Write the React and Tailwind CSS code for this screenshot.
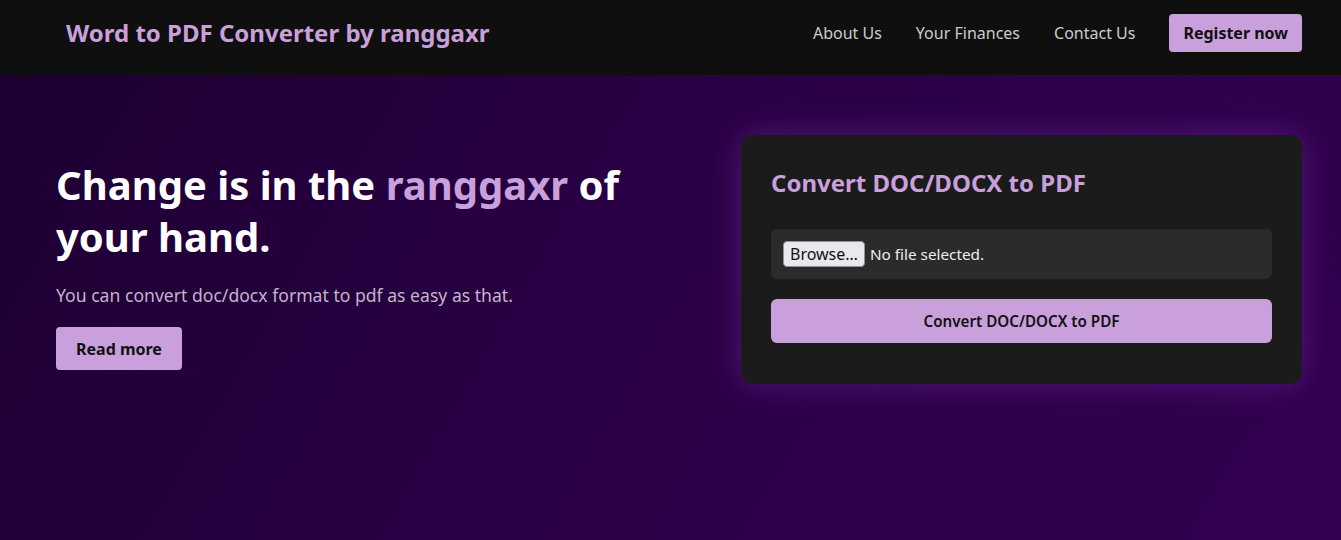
export default function App() {
  return (
    <div className="min-h-[540px] flex flex-col font-['Noto_Sans',sans-serif] bg-[linear-gradient(120deg,#1c0031_0%,#2a0046_50%,#33004f_100%)]">
      <nav className="h-[75px] bg-[#0f0f0f] flex items-center justify-between pl-[66px] pr-[39px] pb-[9px]">
        <div className="text-[24px] font-bold text-[#c9a0dc] leading-none">Word to PDF Converter by ranggaxr</div>
        <div className="flex items-center">
          <a className="text-[16px] text-[#cccccc] mr-[34px]">About Us</a>
          <a className="text-[16px] text-[#cccccc] mr-[34px]">Your Finances</a>
          <a className="text-[16px] text-[#cccccc] mr-[34px]">Contact Us</a>
          <button className="h-[38px] px-[14px] rounded-[4px] bg-[#c9a0dc] text-[#111] text-[16px] font-bold">Register now</button>
        </div>
      </nav>
      <main className="flex items-start justify-between pl-[56px] pr-[39px] pt-[60px]">
        <div className="w-[600px] pt-[24px]">
          <h1 className="text-[40px] leading-[52px] font-bold text-white">
            <span>Change is in the </span><span className="text-[#c9a0dc]">ranggaxr</span><span> of your hand.</span>
          </h1>
          <p className="mt-[18px] text-[17.6px] leading-[28px] text-[#c4b4cc]">You can convert doc/docx format to pdf as easy as that.</p>
          <button className="mt-[18px] h-[43px] px-[20px] rounded-[4px] bg-[#c9a0dc] text-[#111] text-[16px] font-bold">Read more</button>
        </div>
        <div className="w-[561px] rounded-xl bg-[#1b1b1b] px-[30px] pt-[30px] pb-[41px] shadow-[0_0_30px_rgba(150,70,210,0.35)]">
          <h2 className="text-[24px] leading-[36px] font-bold text-[#c9a0dc]">Convert DOC/DOCX to PDF</h2>
          <div className="mt-[28px] h-[50px] rounded-[6px] bg-[#2b2b2b] flex items-center px-[12px]">
            <span className="h-[26px] px-[6px] flex items-center rounded-[4px] bg-[#e9e9ed] border border-[#8f8f9d] text-[16px] text-[#111]">Browse…</span>
            <span className="ml-[5px] text-[15.3px] text-[#eeeeee]">No file selected.</span>
          </div>
          <button className="mt-[20px] w-full h-[44px] rounded-[6px] bg-[#c9a0dc] text-[#111] text-[15.2px] font-semibold">Convert DOC/DOCX to PDF</button>
        </div>
      </main>
    </div>
  );
}
